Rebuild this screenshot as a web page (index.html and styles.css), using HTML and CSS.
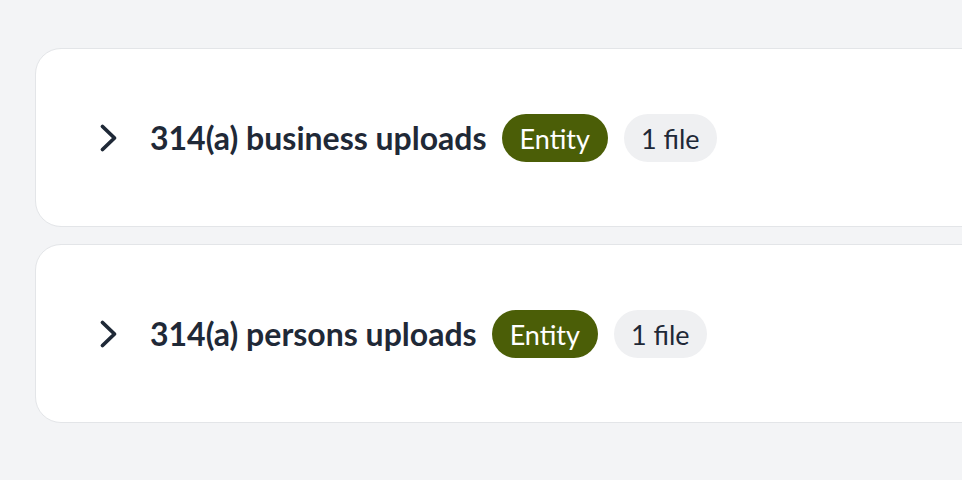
FILE: index.html
```html
<!DOCTYPE html>
<html lang="en">
<head>
<meta charset="utf-8">
<title>Uploads</title>
<link rel="stylesheet" href="styles.css">
</head>
<body>
<main class="list">
  <section class="card">
    <div class="row">
      <svg class="chev" width="20" height="30" viewBox="0 0 20 30" aria-hidden="true"><path d="M3.5 3.5 L15.5 15 L3.5 26.5" fill="none" stroke="currentColor" stroke-width="3.8" stroke-linecap="round" stroke-linejoin="round"/></svg>
      <h2 class="title">314(a) business uploads</h2>
      <span class="badge badge-green">Entity</span>
      <span class="badge badge-gray">1 file</span>
    </div>
  </section>
  <section class="card">
    <div class="row">
      <svg class="chev" width="20" height="30" viewBox="0 0 20 30" aria-hidden="true"><path d="M3.5 3.5 L15.5 15 L3.5 26.5" fill="none" stroke="currentColor" stroke-width="3.8" stroke-linecap="round" stroke-linejoin="round"/></svg>
      <h2 class="title">314(a) persons uploads</h2>
      <span class="badge badge-green">Entity</span>
      <span class="badge badge-gray">1 file</span>
    </div>
  </section>
</main>
</body>
</html>
```
FILE: styles.css
```css
html, body {
  margin: 0;
  padding: 0;
  overflow: hidden;
  background: #f3f4f6;
  font-family: Lato, "Liberation Sans", sans-serif;
  color: #1f2937;
}
.list {
  display: flex;
  flex-direction: column;
  gap: 17px;
  padding: 48px 0 0 35px;
  width: 1100px;
}
.card {
  background: #ffffff;
  border: 1.5px solid #e3e5e8;
  border-radius: 26px;
  padding: 65px 0 64px 63px;
}
.row {
  display: flex;
  align-items: center;
  height: 48px;
}
.chev {
  color: #1f2937;
  flex: none;
  margin-right: 31px;
}
.title {
  margin: 0 15px 0 0;
  font-size: 32px;
  font-weight: 700;
  line-height: 1;
}
.badge {
  display: inline-flex;
  align-items: center;
  height: 48px;
  padding: 0 17px;
  border-radius: 24px;
  font-size: 27px;
  box-sizing: border-box;
  font-variant-ligatures: common-ligatures;
}
.badge-green {
  background: #4b5e07;
  color: #ffffff;
  padding: 0 18px;
  margin-right: 16px;
}
.badge-gray {
  background: #eff0f2;
  color: #1f2937;
}
```
